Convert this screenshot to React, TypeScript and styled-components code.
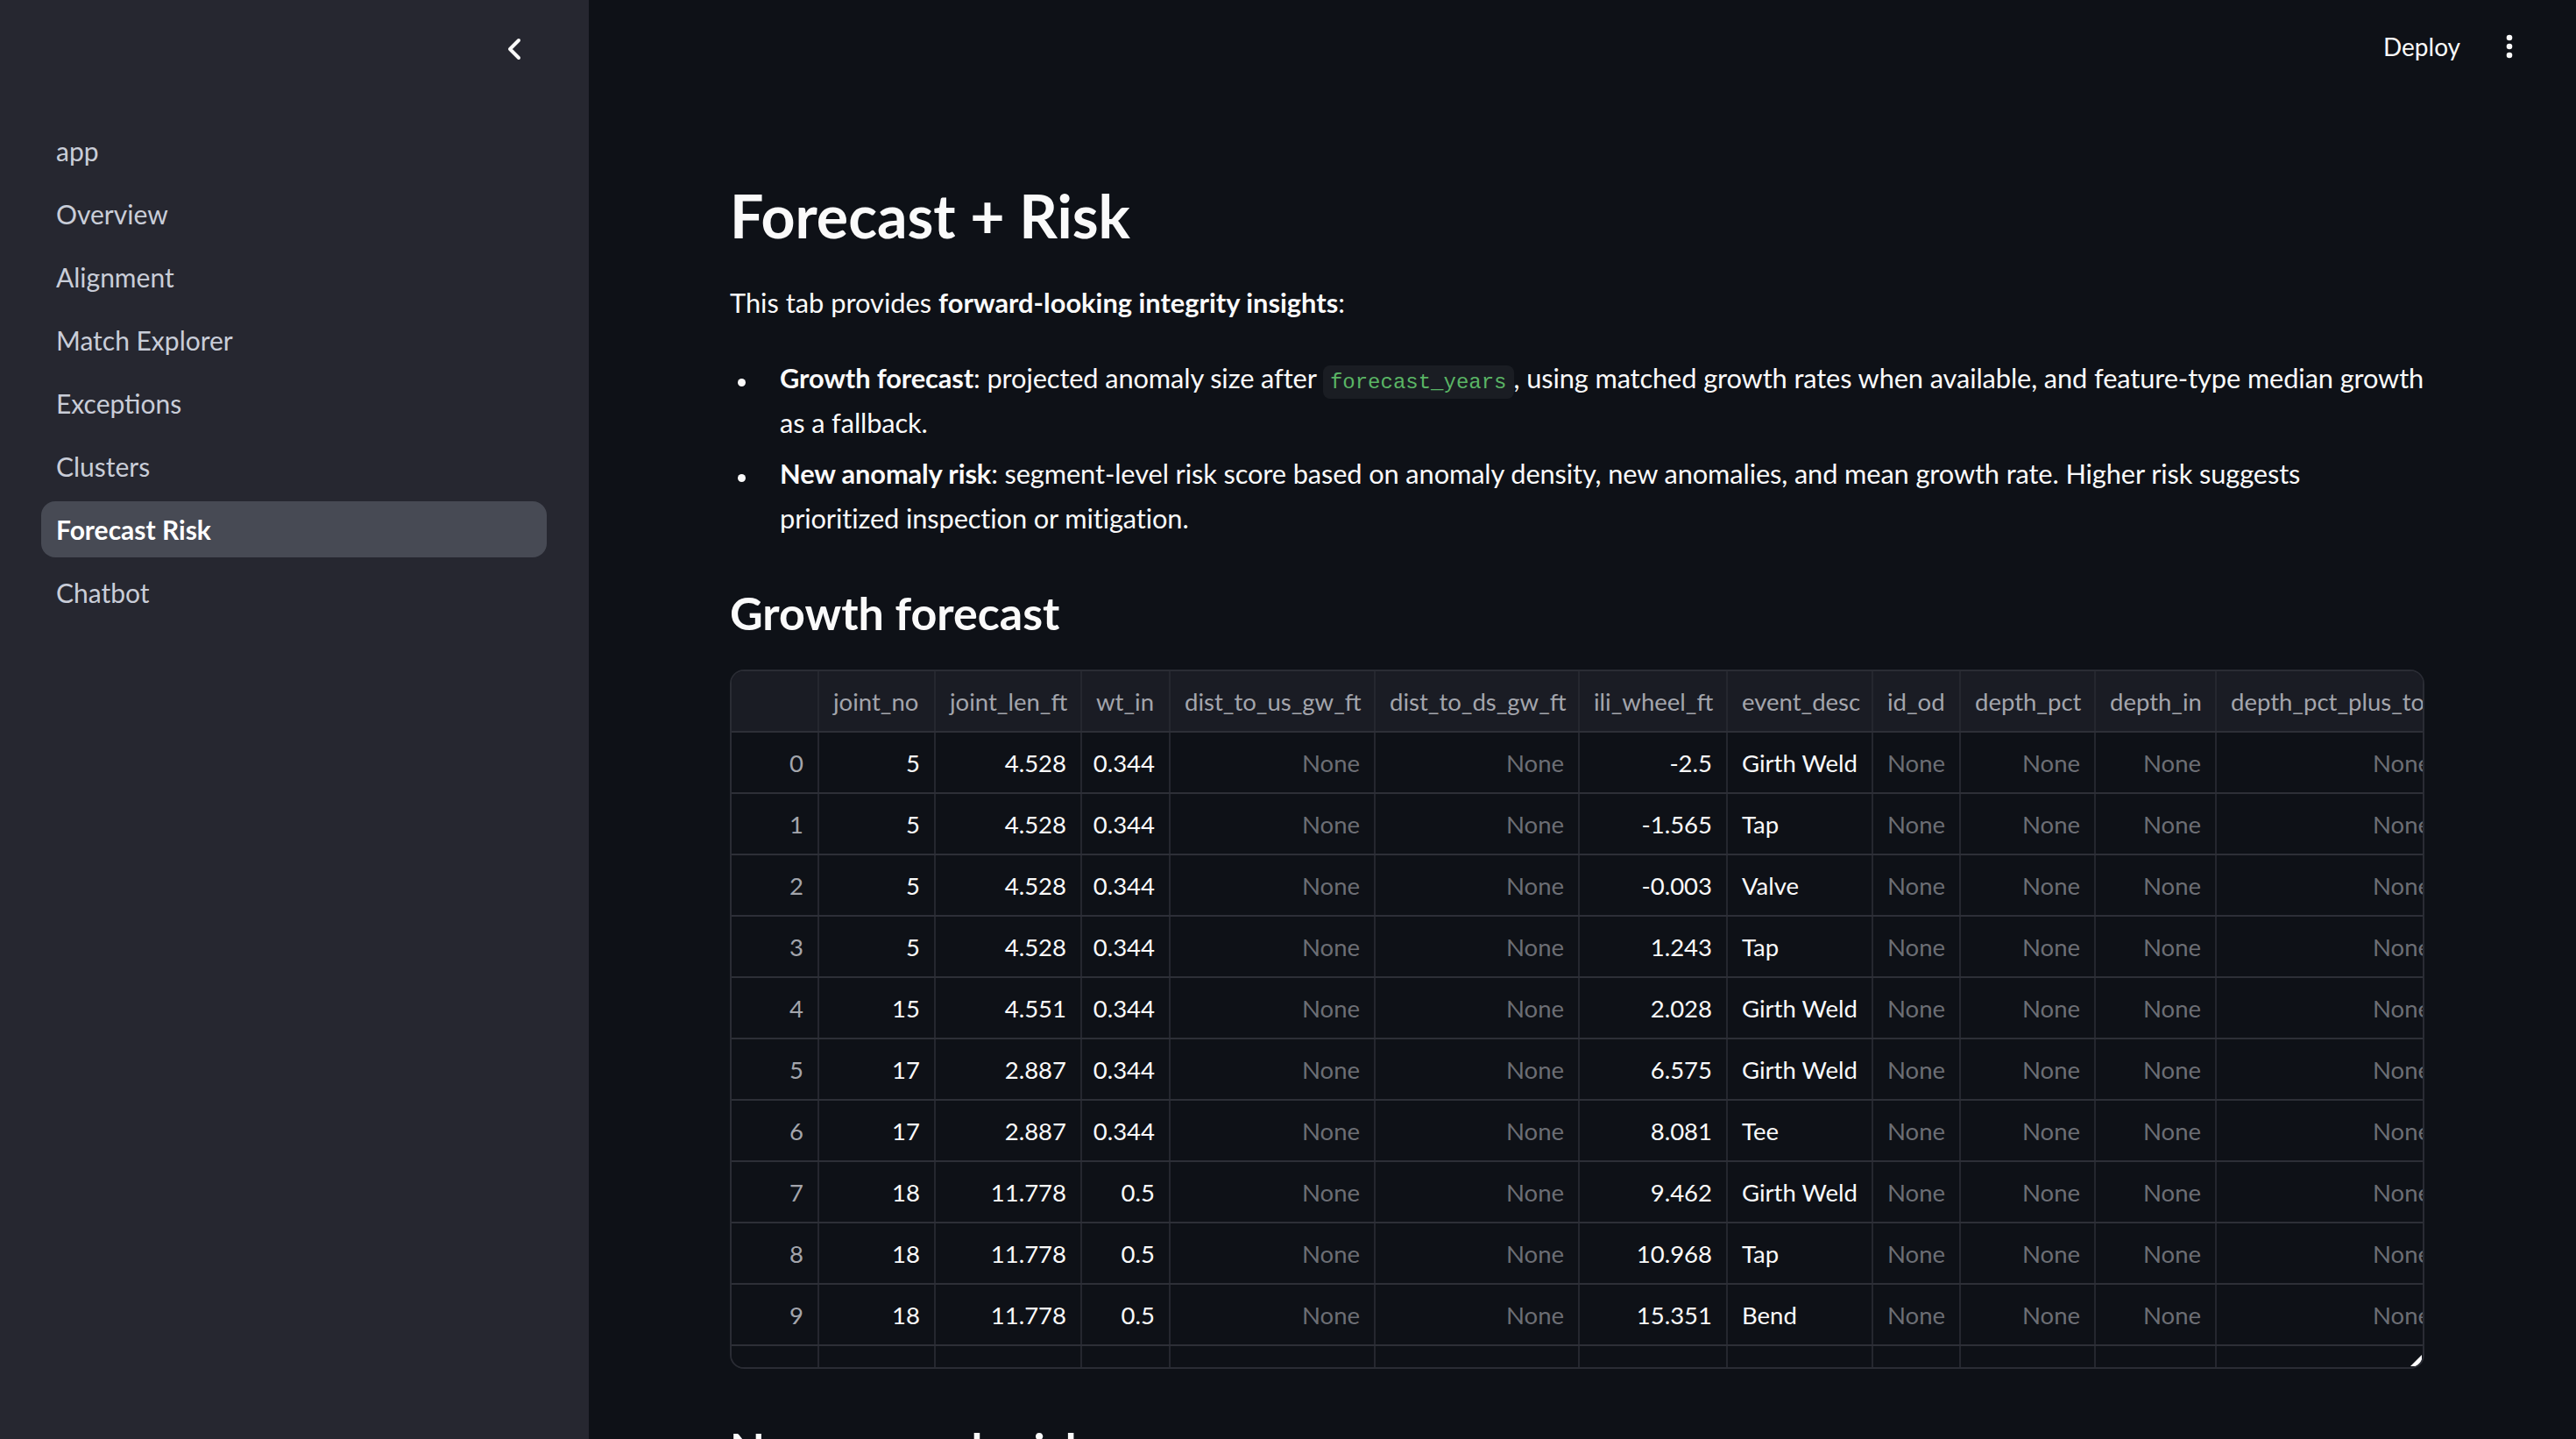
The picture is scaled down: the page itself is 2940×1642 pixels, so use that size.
import React from "react";
import styled, { createGlobalStyle } from "styled-components";

const GlobalStyle = createGlobalStyle`
  html, body {
    margin: 0;
    padding: 0;
    background: #0e1117;
  }
  body {
    font-family: Lato, "Noto Sans", sans-serif;
    color: #fafafa;
  }
  * {
    box-sizing: border-box;
  }
`;

const Shell = styled.div`
  display: flex;
  height: 100vh;
  overflow: hidden;
`;

const Sidebar = styled.aside`
  flex: none;
  width: 672px;
  background: #262730;
  padding: 0 48px 0 47px;
`;

const SidebarTop = styled.div`
  height: 112px;
  display: flex;
  align-items: center;
  justify-content: flex-end;
  padding-right: 27px;
`;

const Nav = styled.nav`
  display: flex;
  flex-direction: column;
  gap: 8px;
  margin-top: 28px;
`;

const NavItem = styled.div<{ $active?: boolean }>`
  height: 64px;
  display: flex;
  align-items: center;
  padding: 0 17px;
  border-radius: 16px;
  font-size: 30px;
  font-weight: ${(p) => (p.$active ? 700 : 400)};
  color: ${(p) => (p.$active ? "#ffffff" : "#c9cdd8")};
  background: ${(p) => (p.$active ? "#474a54" : "transparent")};
`;

const Main = styled.main`
  flex: 1;
  min-width: 0;
  display: flex;
  flex-direction: column;
  overflow: hidden;
`;

const TopBar = styled.header`
  flex: none;
  height: 106px;
  display: flex;
  align-items: center;
  justify-content: flex-end;
  gap: 52px;
  padding-right: 72px;
`;

const DeployButton = styled.span`
  font-size: 28px;
  color: #fafafa;
`;

const Content = styled.div`
  padding: 99px 173px 0 161px;
`;

const Title = styled.h1`
  margin: 0;
  font-size: 68px;
  line-height: 82px;
  font-weight: 700;
`;

const Lead = styled.p`
  margin: 33px 0 0;
  font-size: 30.8px;
  line-height: 51.2px;
`;

const BulletList = styled.ul`
  list-style: none;
  margin: 35px 0 0;
  padding: 0;
  display: flex;
  flex-direction: column;
  gap: 6px;
`;

const Bullet = styled.li`
  display: flex;
  font-size: 30.8px;
  line-height: 51.2px;
  letter-spacing: -0.12px;
`;

const Dot = styled.span`
  flex: none;
  width: 9px;
  height: 9px;
  border-radius: 50%;
  background: #fafafa;
  margin: 26px 39px 0 9px;
`;

const Code = styled.code`
  font-family: "Liberation Mono", "DejaVu Sans Mono", monospace;
  font-size: 24px;
  line-height: 1;
  letter-spacing: 0;
  color: #5ab565;
  background: #1a1d23;
  border-radius: 8px;
  padding: 6px 8px 5px;
`;

const SubHeading = styled.h3<{ $gap: number }>`
  margin: ${(p) => p.$gap}px 0 0;
  font-size: 52px;
  line-height: 62px;
  font-weight: 700;
`;

const Frame = styled.div`
  position: relative;
  margin-top: 34px;
  height: 798px;
  border: 2px solid #2a2c34;
  border-radius: 16px;
  overflow: hidden;
`;

const Row = styled.div<{ $cols: string; $head?: boolean }>`
  display: grid;
  grid-template-columns: ${(p) => p.$cols};
  height: 70px;
  border-bottom: 2px solid #2d2f37;
  background: ${(p) => (p.$head ? "#1a1c24" : "#0e1117")};
`;

const Cell = styled.div<{ $align?: "left" | "right"; $tone?: "head" | "muted" | "value" }>`
  display: flex;
  align-items: center;
  justify-content: ${(p) => (p.$align === "right" ? "flex-end" : "flex-start")};
  padding: 0 16px;
  border-right: 2px solid #25272f;
  font-size: 27.5px;
  white-space: nowrap;
  overflow: hidden;
  color: ${(p) =>
    p.$tone === "head" ? "#a3a5ac" : p.$tone === "muted" ? "#6c6e74" : "#fafafa"};
`;

const ResizeHandle = styled.svg`
  position: absolute;
  right: 1px;
  bottom: 1px;
`;

const columns = [
  { name: "", width: 100, align: "right" as const },
  { name: "joint_no", width: 133, align: "right" as const },
  { name: "joint_len_ft", width: 167, align: "right" as const },
  { name: "wt_in", width: 101, align: "right" as const },
  { name: "dist_to_us_gw_ft", width: 234, align: "right" as const },
  { name: "dist_to_ds_gw_ft", width: 233, align: "right" as const },
  { name: "ili_wheel_ft", width: 169, align: "right" as const },
  { name: "event_desc", width: 166, align: "left" as const },
  { name: "id_od", width: 100, align: "left" as const },
  { name: "depth_pct", width: 154, align: "right" as const },
  { name: "depth_in", width: 138, align: "right" as const },
  { name: "depth_pct_plus_tol", width: 262, align: "right" as const },
];

const gridCols = columns.map((c) => `${c.width}px`).join(" ");

const rows: [number, number, string, string, string, string][] = [
  [0, 5, "4.528", "0.344", "-2.5", "Girth Weld"],
  [1, 5, "4.528", "0.344", "-1.565", "Tap"],
  [2, 5, "4.528", "0.344", "-0.003", "Valve"],
  [3, 5, "4.528", "0.344", "1.243", "Tap"],
  [4, 15, "4.551", "0.344", "2.028", "Girth Weld"],
  [5, 17, "2.887", "0.344", "6.575", "Girth Weld"],
  [6, 17, "2.887", "0.344", "8.081", "Tee"],
  [7, 18, "11.778", "0.5", "9.462", "Girth Weld"],
  [8, 18, "11.778", "0.5", "10.968", "Tap"],
  [9, 18, "11.778", "0.5", "15.351", "Bend"],
  [10, 19, "40.51", "0.344", "20.054", "Girth Weld"],
];

const pages = ["app", "Overview", "Alignment", "Match Explorer", "Exceptions", "Clusters", "Forecast Risk", "Chatbot"];

const ForecastTable: React.FC = () => (
  <Frame>
    <Row $cols={gridCols} $head>
      {columns.map((c, i) => (
        <Cell key={i} $tone="head">
          {c.name}
        </Cell>
      ))}
    </Row>
    {rows.map(([idx, joint, len, wt, wheel, desc]) => {
      const values: (string | null)[] = [String(joint), len, wt, null, null, wheel, desc, null, null, null, null];
      return (
        <Row key={idx} $cols={gridCols}>
          <Cell $align="right" $tone="head">
            {idx}
          </Cell>
          {values.map((v, i) => (
            <Cell key={i} $align={columns[i + 1].align} $tone={v === null ? "muted" : "value"}>
              {v === null ? "None" : v}
            </Cell>
          ))}
        </Row>
      );
    })}
    <ResizeHandle width="13" height="13" viewBox="0 0 13 13">
      <polygon points="13,0 13,13 0,13" fill="#ffffff" />
    </ResizeHandle>
  </Frame>
);

const App: React.FC = () => (
  <>
    <GlobalStyle />
    <Shell>
      <Sidebar>
        <SidebarTop>
          <svg width="20" height="28" viewBox="0 0 20 28">
            <polyline points="15,4 5,14 15,24" fill="none" stroke="#fafafa" strokeWidth="4" strokeLinecap="round" strokeLinejoin="round" />
          </svg>
        </SidebarTop>
        <Nav>
          {pages.map((p) => (
            <NavItem key={p} $active={p === "Forecast Risk"}>
              {p}
            </NavItem>
          ))}
        </Nav>
      </Sidebar>
      <Main>
        <TopBar>
          <DeployButton>Deploy</DeployButton>
          <svg width="8" height="30" viewBox="0 0 8 30">
            <circle cx="4" cy="5" r="3.3" fill="#fafafa" />
            <circle cx="4" cy="15" r="3.3" fill="#fafafa" />
            <circle cx="4" cy="25" r="3.3" fill="#fafafa" />
          </svg>
        </TopBar>
        <Content>
          <Title>Forecast + Risk</Title>
          <Lead>
            This tab provides <strong>forward-looking integrity insights</strong>:
          </Lead>
          <BulletList>
            <Bullet>
              <Dot />
              <span>
                <strong>Growth forecast</strong>: projected anomaly size after <Code>forecast_years</Code>, using matched
                growth rates when available, and feature-type median growth as a fallback.
              </span>
            </Bullet>
            <Bullet>
              <Dot />
              <span>
                <strong>New anomaly risk</strong>: segment-level risk score based on anomaly density, new anomalies, and
                mean growth rate. Higher risk suggests
                <br />
                prioritized inspection or mitigation.
              </span>
            </Bullet>
          </BulletList>
          <SubHeading $gap={51}>Growth forecast</SubHeading>
          <ForecastTable />
          <SubHeading $gap={60}>New anomaly risk</SubHeading>
        </Content>
      </Main>
    </Shell>
  </>
);

export default App;
